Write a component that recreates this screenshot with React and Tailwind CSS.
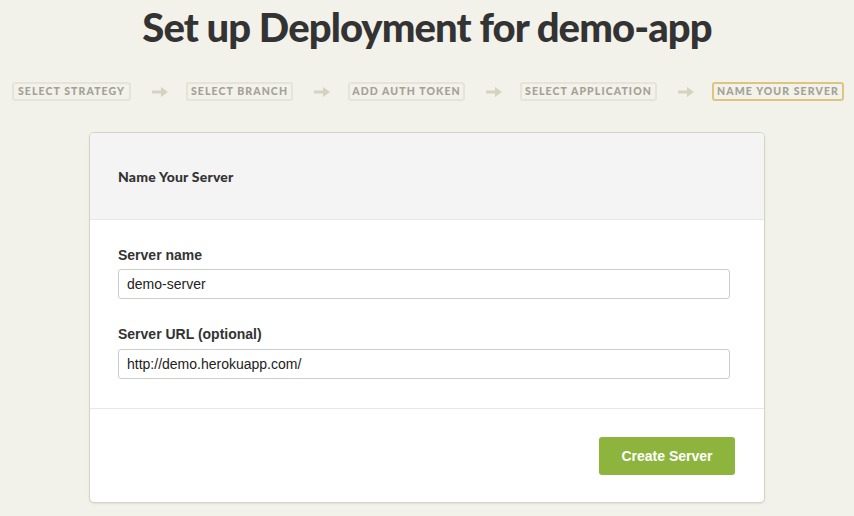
import React from "react";

const steps = [
  { label: "SELECT STRATEGY", w: "w-[119px]" },
  { label: "SELECT BRANCH", w: "w-[107px]" },
  { label: "ADD AUTH TOKEN", w: "w-[117px]" },
  { label: "SELECT APPLICATION", w: "w-[137px]" },
  { label: "NAME YOUR SERVER", w: "w-[132px]" },
];

function Arrow() {
  return (
    <svg width="16" height="10" viewBox="0 0 16 10" className="ml-[21px] mr-[18px] shrink-0">
      <polygon points="0,3.5 9,3.5 9,0 16,5 9,10 9,6.5 0,6.5" fill="#d5d3bf" />
    </svg>
  );
}

export default function App() {
  return (
    <div className="min-h-[516px] w-[854px] bg-[#f2f1ea] overflow-hidden" style={{ fontFamily: "'Liberation Sans', Arial, sans-serif" }}>
      <h1
        className="text-center text-[40px] leading-[48px] pt-[3px] text-[#333333] tracking-[-0.9px]"
        style={{ fontFamily: "Lato, sans-serif", fontWeight: 900 }}
      >
        Set up Deployment for demo-app
      </h1>
      <div className="flex items-center pl-[12px] mt-[31px]" style={{ fontFamily: "Lato, sans-serif" }}>
        {steps.map((s, i) => (
          <React.Fragment key={s.label}>
            {i > 0 && <Arrow />}
            <div
              className={
                s.w +
                " shrink-0 h-[19px] flex items-center justify-center rounded-[3px] border-2 text-[10.5px] font-black tracking-[1.1px] text-[#a3a195] whitespace-nowrap " +
                (i === steps.length - 1 ? "border-[#dcc57f]" : "border-[#e6e4d9]")
              }
            >
              {s.label}
            </div>
          </React.Fragment>
        ))}
      </div>
      <div className="mt-[31px] ml-[89px] w-[676px] rounded-[5px] border border-[#d6d4c2] bg-white shadow-[0_1px_2px_rgba(0,0,0,0.08)] overflow-hidden">
        <div className="h-[87px] bg-[#f4f4f4] border-b border-[#e8e8e8] flex items-center px-[28px]">
          <span className="text-[14px] text-[#333] tracking-[0.2px]" style={{ fontFamily: "Lato, sans-serif", fontWeight: 900 }}>
            Name Your Server
          </span>
        </div>
        <div className="px-[28px] pt-[25px] pb-[29px] border-b border-[#e8e8e8]">
          <label className="block text-[14px] leading-[20px] font-bold text-[#333]">Server name</label>
          <div className="mt-[4px] w-[612px] h-[30px] border border-[#cccccc] rounded-[3px] flex items-center px-[8px] text-[14px] text-[#222]">
            demo-server
          </div>
          <label className="block mt-[25px] text-[14px] leading-[20px] font-bold text-[#333]">Server URL (optional)</label>
          <div className="mt-[5px] w-[612px] h-[30px] border border-[#cccccc] rounded-[3px] flex items-center px-[8px] text-[14px] text-[#222]">
            http://demo.herokuapp.com/
          </div>
        </div>
        <div className="flex justify-end px-[29px] pt-[28px] pb-[27px]">
          <button className="w-[136px] h-[38px] rounded-[3px] bg-[#8db53d] text-white text-[14px] font-bold">
            Create Server
          </button>
        </div>
      </div>
    </div>
  );
}
